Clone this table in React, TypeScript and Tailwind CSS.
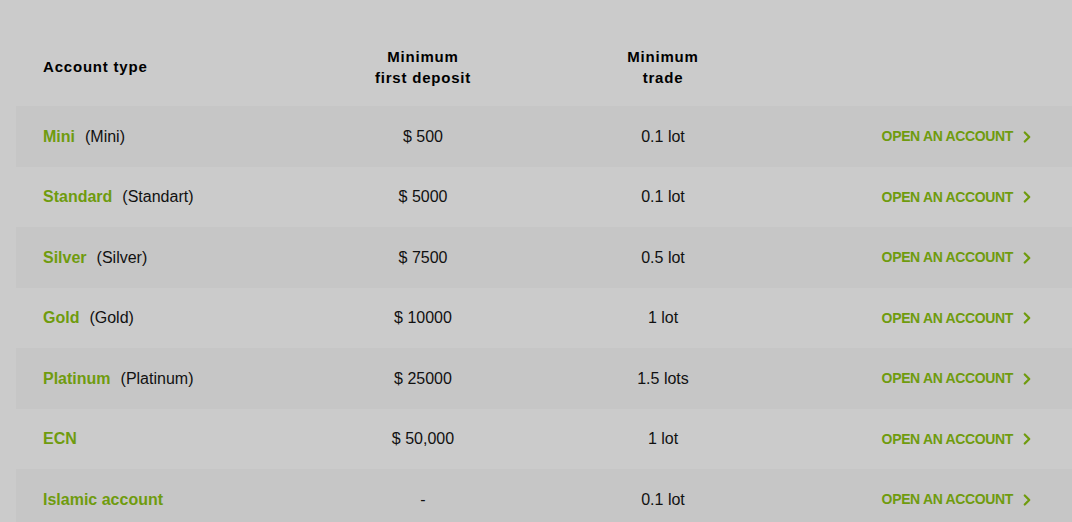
import { ChevronRight } from "lucide-react";

type Account = {
    name: string;
    alias?: string;
    deposit: string;
    trade: string;
};

const accounts: Account[] = [
    { name: "Mini", alias: "(Mini)", deposit: "$ 500", trade: "0.1 lot" },
    { name: "Standard", alias: "(Standart)", deposit: "$ 5000", trade: "0.1 lot" },
    { name: "Silver", alias: "(Silver)", deposit: "$ 7500", trade: "0.5 lot" },
    { name: "Gold", alias: "(Gold)", deposit: "$ 10000", trade: "1 lot" },
    { name: "Platinum", alias: "(Platinum)", deposit: "$ 25000", trade: "1.5 lots" },
    { name: "ECN", deposit: "$ 50,000", trade: "1 lot" },
    { name: "Islamic account", deposit: "-", trade: "0.1 lot" },
];

const cols = "grid grid-cols-[286px_242px_238px_1fr]";

const App = () => {
    return (
        <div className="w-[1072px] h-[522px] overflow-hidden bg-[#cbcbcb] pl-4 font-['Liberation_Sans',Arial,sans-serif] text-[#111]">
            {/* header */}
            <div className={`${cols} h-[106px] pt-[27px] items-center text-[15px] font-bold leading-[21px] tracking-[0.8px] text-black`}>
                <div className="pl-[27px]">Account type</div>
                <div className="text-center">Minimum<br />first deposit</div>
                <div className="text-center">Minimum<br />trade</div>
                <div></div>
            </div>

            {accounts.map((a, i) => (
                <div
                    key={a.name}
                    className={`${cols} h-[60.5px] items-center pt-[1px] text-[16px] ${i % 2 === 0 ? "bg-[#c6c6c6]" : "bg-[#cbcbcb]"}`}
                >
                    <div className="pl-[27px]">
                        <span className="font-bold text-[#6f9b0e]">{a.name}</span>
                        {a.alias && <span className="ml-[10px]">{a.alias}</span>}
                    </div>
                    <div className="text-center">{a.deposit}</div>
                    <div className="text-center">{a.trade}</div>
                    <div className="flex justify-end items-center pr-[36px]">
                        <a href="#" className="flex items-center gap-[5px] text-[14px] font-bold tracking-[-0.35px] text-[#6f9b0e]">
                            <span>OPEN AN ACCOUNT</span>
                            <ChevronRight size={18} strokeWidth={3} />
                        </a>
                    </div>
                </div>
            ))}
        </div>
    );
};

export default App;
